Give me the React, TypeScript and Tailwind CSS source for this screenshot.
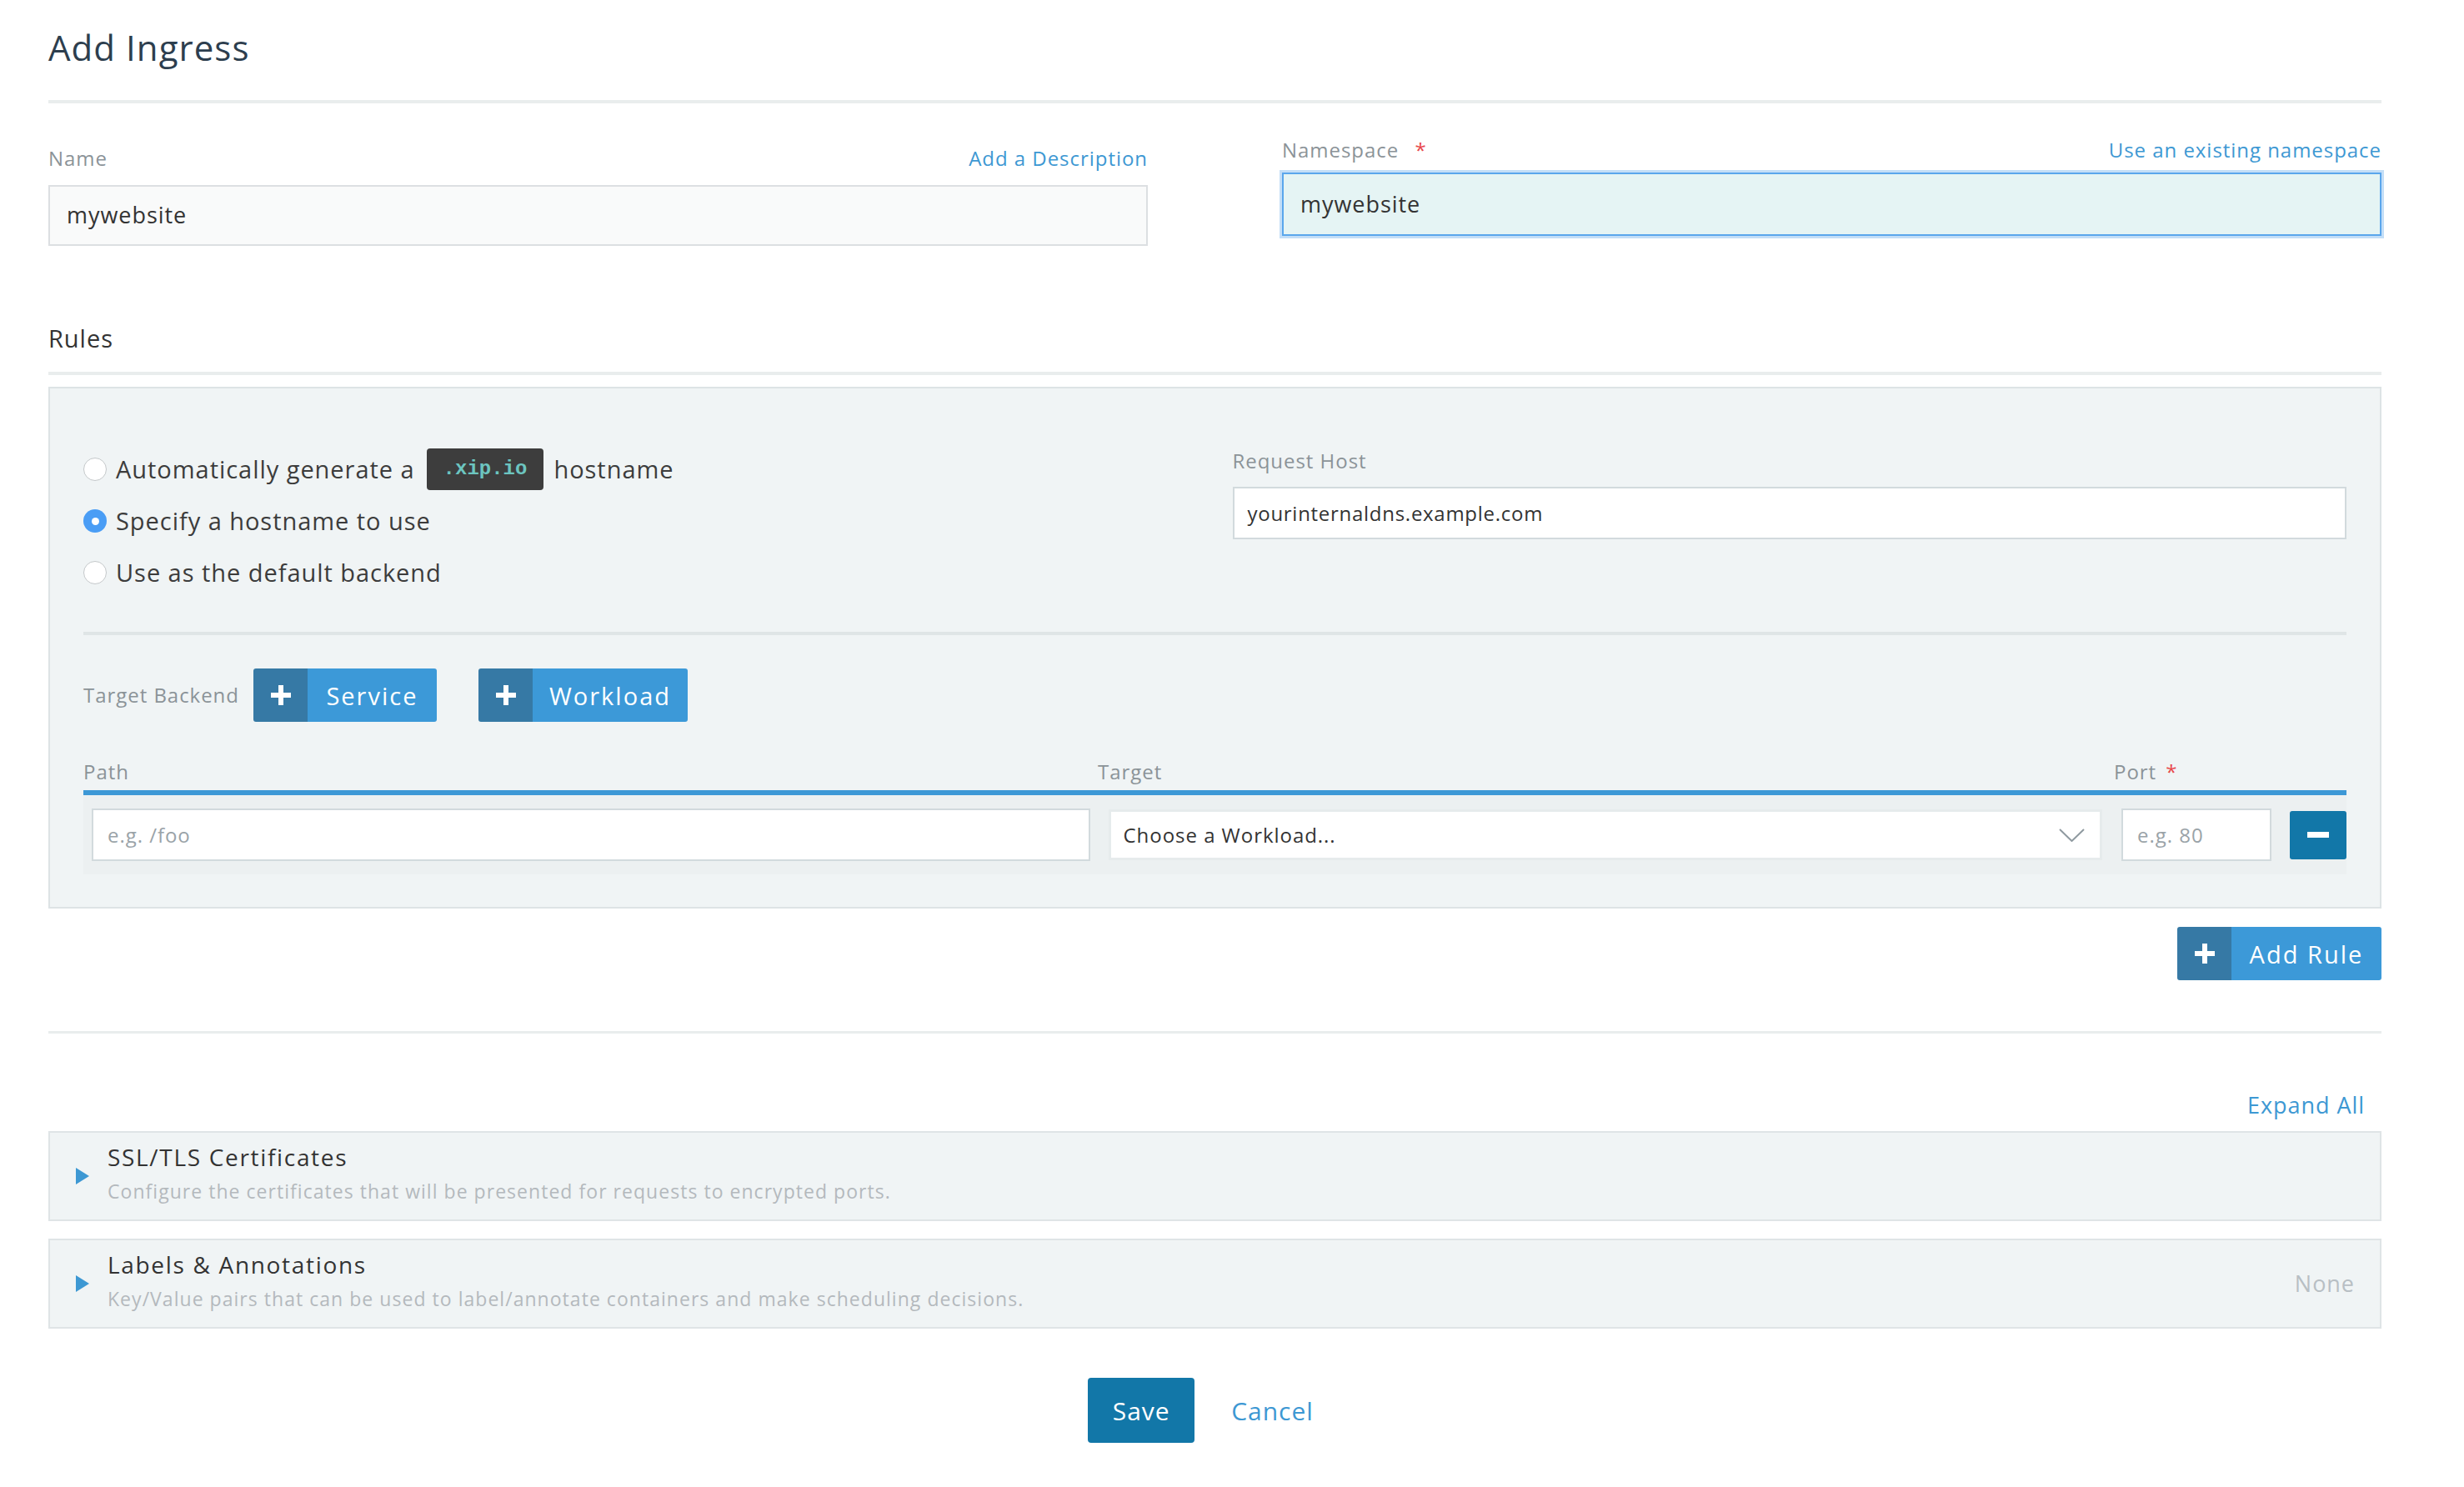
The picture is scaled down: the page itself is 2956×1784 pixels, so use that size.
import React from 'react';

const PlusIcon = () => (
  <svg width="24" height="24" viewBox="0 0 24 24" fill="white">
    <rect x="9" y="0" width="6" height="24" />
    <rect x="0" y="9" width="24" height="6" />
  </svg>
);

function AddButton({ label, width }: { label: string; width: string }) {
  return (
    <button type="button" className={`flex h-[64px] ${width} overflow-hidden rounded-[3px] text-white`}>
      <span className="flex h-full w-[65px] items-center justify-center bg-[#3679a5]">
        <PlusIcon />
      </span>
      <span className="flex h-full flex-1 items-center justify-center bg-[#3c99d8] text-[29px] leading-none tracking-[0.07em]">
        {label}
      </span>
    </button>
  );
}

function Radio({ checked }: { checked?: boolean }) {
  if (checked) {
    return (
      <span className="flex h-[28px] w-[28px] shrink-0 items-center justify-center rounded-full bg-[#4a9df5]">
        <span className="h-[9px] w-[9px] rounded-full bg-white" />
      </span>
    );
  }
  return <span className="h-[28px] w-[28px] shrink-0 rounded-full border-[1.5px] border-[#c4c8ca] bg-white" />;
}

function Panel({ title, desc, right }: { title: string; desc: string; right?: string }) {
  return (
    <div className="flex h-[108px] items-center border-2 border-[#dfe4e6] bg-[#f0f4f5] pl-[31px] pr-[30px]">
      <svg width="16" height="20" viewBox="0 0 16 20" className="shrink-0">
        <polygon points="0,0 16,10 0,20" fill="#3d98d3" />
      </svg>
      <div className="mb-[8px] ml-[22px] flex-1">
        <div className="text-[28px] leading-[34px] tracking-[0.06em] text-[#333]">{title}</div>
        <div className="mt-[10px] text-[23px] leading-[29px] tracking-[0.045em] text-[#b4b9bd]">{desc}</div>
      </div>
      {right && <div className="text-[27px] text-[#b8bfc4]">{right}</div>}
    </div>
  );
}

export default function App() {
  return (
    <div className="min-h-screen bg-white font-['Open_Sans',sans-serif] tracking-[0.06em]">
      <div className="ml-[58px] w-[2799px] pt-[31px] pb-[40px]">
        <h1 className="text-[42px] leading-[52px] tracking-[0.025em] text-[#2d3e4e]">Add Ingress</h1>
        <div className="mt-[37px] h-[4px] bg-[#e9eded]" />

        {/* Name / Namespace */}
        <div className="mt-[41px] grid grid-cols-2 items-start gap-[161px]">
          <div className="pt-[10px]">
            <div className="flex h-[30px] items-center justify-between text-[24px] leading-[30px]">
              <span className="text-[#8b9398]">Name</span>
              <span className="text-[#3d98d3]">Add a Description</span>
            </div>
            <div className="mt-[17px] flex h-[73px] items-center border-2 border-[#dcdfe2] bg-[#f9fafa] px-[20px] text-[27px] text-[#333]">
              mywebsite
            </div>
          </div>
          <div>
            <div className="flex h-[30px] items-center justify-between text-[24px] leading-[30px]">
              <span className="text-[#8b9398]">
                Namespace <span className="ml-[12px] text-[#e8474a]">*</span>
              </span>
              <span className="text-[#3d98d3]">Use an existing namespace</span>
            </div>
            <div className="mt-[12px] flex h-[76px] items-center border-2 border-[#5aa6ec] bg-[#e5f4f4] px-[20px] text-[27px] text-[#333] shadow-[0_0_0_3px_#c3def7]">
              mywebsite
            </div>
          </div>
        </div>

        {/* Rules */}
        <h2 className="mt-[93px] text-[29px] leading-[36px] text-[#333]">Rules</h2>
        <div className="mt-[22px] h-[4px] bg-[#e9eded]" />

        <div className="mt-[14px] border-2 border-[#dde3e5] bg-[#f0f4f5] px-[40px] pt-[66px] pb-[39px]">
          <div className="grid grid-cols-2 items-start gap-[42px]">
            <div className="text-[29px] text-[#3c3c3c]">
              <div className="flex h-[62px] items-center">
                <Radio />
                <span className="ml-[11px]">Automatically generate a</span>
                <span className="ml-[14px] flex h-[50px] items-center rounded-[4px] bg-[#3d3d3d] px-[20px] font-['Liberation_Mono',monospace] text-[24px] font-bold tracking-normal text-[#6cc5c0]">
                  .xip.io
                </span>
                <span className="ml-[12px]">hostname</span>
              </div>
              <div className="flex h-[62px] items-center">
                <Radio checked />
                <span className="ml-[11px]">Specify a hostname to use</span>
              </div>
              <div className="flex h-[62px] items-center">
                <Radio />
                <span className="ml-[11px]">Use as the default backend</span>
              </div>
            </div>
            <div className="mt-[6px]">
              <div className="text-[24px] leading-[30px] text-[#8b9398]">Request Host</div>
              <div className="mt-[16px] flex h-[63px] items-center border-2 border-[#d2dadd] bg-white px-[16px] text-[24px] tracking-[0.03em] text-[#333]">
                yourinternaldns.example.com
              </div>
            </div>
          </div>

          <div className="mt-[40px] h-[4px] bg-[#dfe5e6]" />

          <div className="mt-[40px] flex items-center">
            <span className="w-[204px] text-[24px] text-[#8b9398]">Target Backend</span>
            <AddButton label="Service" width="w-[220px]" />
            <div className="ml-[50px]">
              <AddButton label="Workload" width="w-[251px]" />
            </div>
          </div>

          <div className="mt-[45px] flex text-[24px] leading-[30px] text-[#8b9398]">
            <span className="w-[1217px]">Path</span>
            <span className="w-[1219px]">Target</span>
            <span>
              Port <span className="ml-[4px] text-[#e8474a]">*</span>
            </span>
          </div>
          <div className="mt-[7px] h-[6px] bg-[#3d98d6]" />
          <div className="flex items-center bg-[#ecf0f1] py-[16px] pl-[10px] text-[24px]">
            <div className="flex h-[63px] w-[1198px] items-center border-2 border-[#d2dadd] bg-white px-[17px] text-[#9aa3a8]">
              e.g. /foo
            </div>
            <div className="ml-[22px] flex h-[61px] w-[1193px] items-center justify-between border-[3px] border-[#e6ebec] bg-white pl-[15px] pr-[18px] text-[#333]">
              <span>Choose a Workload...</span>
              <svg width="31" height="16" viewBox="0 0 31 16" fill="none">
                <polyline points="1,1 15.5,15 30,1" stroke="#8f9aa0" strokeWidth="2" />
              </svg>
            </div>
            <div className="ml-[23px] flex h-[63px] w-[180px] items-center border-2 border-[#d2dadd] bg-white px-[17px] text-[#9aa3a8]">
              e.g. 80
            </div>
            <button
              type="button"
              className="ml-[22px] flex h-[58px] w-[68px] items-center justify-center rounded-[3px] bg-[#1277a8]"
            >
              <span className="h-[7px] w-[26px] bg-white" />
            </button>
          </div>
        </div>

        <div className="mt-[22px] flex justify-end">
          <AddButton label="Add Rule" width="w-[245px]" />
        </div>

        <div className="mt-[61px] h-[3px] bg-[#e9eded]" />

        <div className="mt-[69px] flex justify-end pr-[20px]">
          <span className="text-[27px] leading-[34px] text-[#3d98d3]">Expand All</span>
        </div>

        <div className="mt-[14px]">
          <Panel
            title="SSL/TLS Certificates"
            desc="Configure the certificates that will be presented for requests to encrypted ports."
          />
        </div>
        <div className="mt-[21px]">
          <Panel
            title="Labels & Annotations"
            desc="Key/Value pairs that can be used to label/annotate containers and make scheduling decisions."
            right="None"
          />
        </div>

        <div className="mt-[59px] flex items-center justify-center pr-[34px]">
          <button type="button" className="h-[78px] w-[128px] rounded-[4px] bg-[#1277a8] text-[30px] text-white">
            Save
          </button>
          <span className="ml-[44px] text-[30px] text-[#3d98d3]">Cancel</span>
        </div>
      </div>
    </div>
  );
}
